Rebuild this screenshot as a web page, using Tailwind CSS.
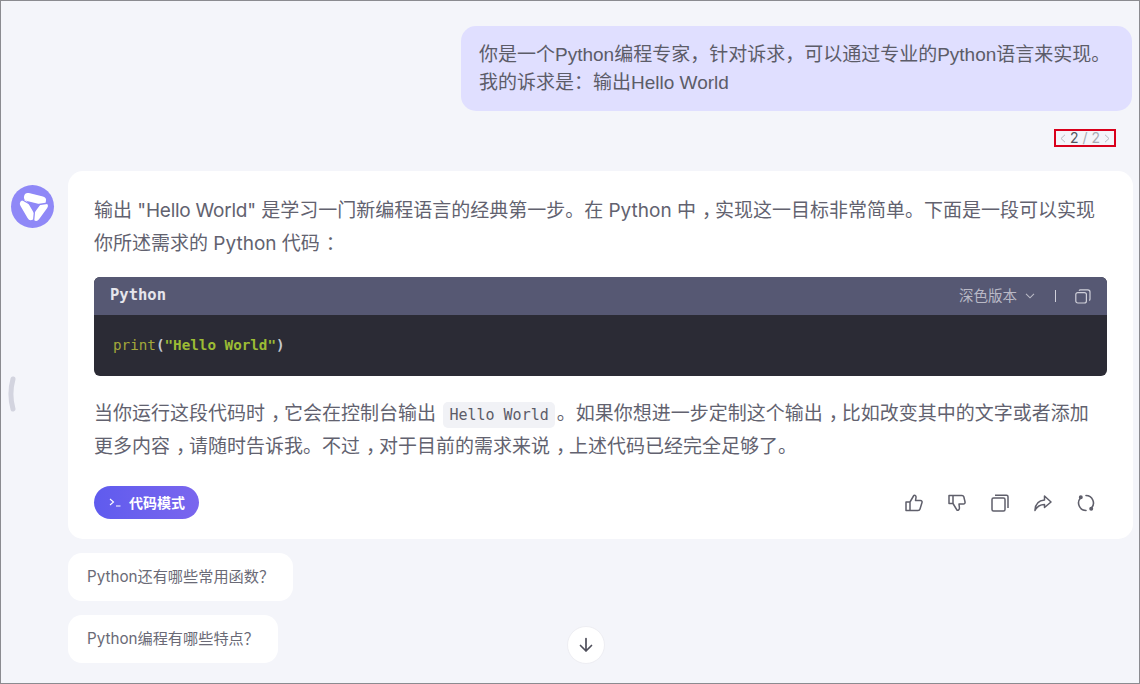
<!DOCTYPE html>
<html lang="zh">
<head>
<meta charset="utf-8">
<script src="https://cdn.jsdelivr.net/npm/@tailwindcss/browser@4"></script>
</head>
<body class="w-[1140px] h-[684px] overflow-hidden bg-[#f4f5fa] font-['Inter','Noto_Sans_CJK_SC',sans-serif] text-[#62626f]">
<div class="relative w-[1140px] h-[684px] border border-[#8b8b90] pt-[25px] overflow-hidden">

  <!-- user question -->
  <div class="flex justify-end pr-[7px]">
    <div class="w-[671px] h-[85px] rounded-[15px] bg-[#e0dfff] pl-[18px] pt-[15px] font-['Liberation_Sans','Noto_Sans_CJK_SC',sans-serif] text-[19px] leading-[28px] text-[#5c5c68]">
      <p class="whitespace-nowrap">你是一个Python编程专家，针对诉求，可以通过专业的Python语言来实现。</p>
      <p class="whitespace-nowrap">我的诉求是：输出Hello World</p>
    </div>
  </div>
  <div class="flex justify-end pr-[23px] mt-[18px]">
    <div class="w-[62px] h-[18px] border-2 border-[#d9001b] flex items-center justify-center gap-[4px] text-[14px] leading-none text-[#a9a9b2]">
      <svg class="w-[6px] h-[9px]" viewBox="0 0 6 9" fill="none" stroke="#b8b8c0" stroke-width="1"><path d="M5 .8 1 4.500 5 8.200"/></svg>
      <span><span class="text-[#55555f]">2</span> / 2</span>
      <svg class="w-[6px] h-[9px]" viewBox="0 0 6 9" fill="none" stroke="#b8b8c0" stroke-width="1"><path d="M1 .8 5 4.500 1 8.200"/></svg>
    </div>
  </div>

  <!-- answer -->
  <div class="flex mt-[24px] pl-[10px] pr-[7px]">
    <div class="w-[43px] h-[43px] mt-[14px] rounded-full bg-[#8f88f7] shrink-0">
      <svg class="w-[43px] h-[43px]" viewBox="0 0 43 43" fill="none" stroke-linecap="round" stroke-linejoin="round">
        <path d="M17 12 31 15.500" stroke="#fff" stroke-width="8"/>
        <path d="M13 19 20 31" stroke="#fff" stroke-width="8"/>
        <path d="M33 21 25 32" stroke="#fff" stroke-width="7.500"/>
        <path d="M19.500 19.500H28L23.500 26Z" fill="#8f88f7" stroke="#8f88f7" stroke-width="1"/>
        <path d="M19.500 19.500 10 14M28 19.500 38 18M23.500 26 22.500 37" stroke="#8f88f7" stroke-width="1.300"/>
      </svg>
    </div>
    <div class="ml-[14px] w-[1065px] h-[368px] rounded-[15px] bg-white pt-[23px] px-[26px]">
      <p class="text-[19px] leading-[33px] whitespace-nowrap">输出 <span class="tracking-[-0.25px]">"Hello World"</span> 是学习一门新编程语言的经典第一步。在 Python 中<span class="pl-[6px] tracking-[-6px]">，</span>实现这一目标非常简单。下面是一段可以实现</p>
      <p class="text-[19px] leading-[33px] whitespace-nowrap">你所述需求的 Python 代码<span class="pl-[6px] tracking-[-6px]">：</span></p>

      <div class="mt-[17px] w-[1013px] h-[99px] rounded-[6px] overflow-hidden bg-[#2b2b35]">
        <div class="h-[38px] bg-[#565873] flex items-center pl-[16px] pr-[16px] text-[#dcdce4]">
          <span class="font-['DejaVu_Sans_Mono',monospace] font-bold text-[15.5px] text-[#e6e6ec]">Python</span>
          <span class="ml-auto text-[14.5px] text-[#b9b9c6]">深色版本</span>
          <svg class="ml-[8px] w-[10px] h-[6px]" viewBox="0 0 10 6" fill="none" stroke="#b9b9c6" stroke-width="1.100"><path d="M1 .8 5 4.800 9 .8"/></svg>
          <span class="ml-[20px] w-px h-[12px] bg-[#d0d0da]"></span>
          <svg class="ml-[19px] w-[16px] h-[15px]" viewBox="0 0 16 15" fill="none" stroke="#cfcfd9" stroke-width="1.200"><rect x=".8" y="3.600" width="10.600" height="10.400" rx="2"/><path d="M4 1.600c.3-.5.8-.8 1.400-.8h7.400c1.200 0 2.200 1 2.200 2.200v7c0 .6-.3 1.200-.8 1.500"/></svg>
        </div>
        <div class="pl-[19px] pt-[20px] font-['DejaVu_Sans_Mono',monospace] text-[14.25px] leading-[20px] font-bold text-[#c3c7cf] whitespace-nowrap"><span class="font-normal text-[#a3a83a]">print</span>(<span class="text-[#9cbc34]">"Hello World"</span>)</div>
      </div>

      <p class="mt-[21px] text-[19px] leading-[33px] whitespace-nowrap">当你运行这段代码时<span class="pl-[6px] tracking-[-6px]">，</span>它会在控制台输出 <code class="inline-block ml-[2px] mr-[2px] h-[26px] leading-[26px] px-[6px] rounded-[5px] bg-[#f1f2f6] font-['DejaVu_Sans_Mono',monospace] text-[15px] text-[#5c5c68]">Hello World</code><span>。</span>如果你想进一步定制这个输出<span class="pl-[6px] tracking-[-6px]">，</span>比如改变其中的文字或者添加</p>
      <p class="text-[19px] leading-[33px] whitespace-nowrap">更多内容<span class="pl-[6px] tracking-[-6px]">，</span>请随时告诉我。不过<span class="pl-[6px] tracking-[-6px]">，</span>对于目前的需求来说<span class="pl-[6px] tracking-[-6px]">，</span>上述代码已经完全足够了。</p>

      <div class="mt-[23px] flex items-center justify-between pr-[12px]">
        <div class="w-[105px] h-[33px] rounded-full bg-gradient-to-r from-[#5f5bee] to-[#7a66ee] flex items-center pl-[15px] text-white text-[14px] font-bold">
          <svg class="w-[12px] h-[9px]" viewBox="0 0 12 9" fill="none" stroke="#fff" stroke-width="1.100"><path d="M1 1 4.500 4 1 7M7 8h4.500"/></svg>
          <span class="ml-[8px]">代码模式</span>
        </div>
        <div class="flex items-center gap-[25px] text-[#5f5f6b]">
          <svg class="w-[18px] h-[18px]" viewBox="0 0 18 18" fill="none" stroke="currentColor" stroke-width="1.500" stroke-linejoin="round"><path d="M1 8h4v8.500H1zM5 8l3.800-6.500c1.500-.6 2.400.5 2.200 2L10.500 6.500h5c1.200 0 1.800 1 1.500 2l-2 6.500c-.3 1-1 1.500-2 1.500H3"/></svg>
          <svg class="w-[18px] h-[18px]" viewBox="0 0 18 18" fill="none" stroke="currentColor" stroke-width="1.500" stroke-linejoin="round"><path d="M1 1.500h4v8H1zM3 1.500h11c1 0 1.500.5 1.800 1.300l1.200 5c.3 1.200-.4 2.200-1.600 2.200h-4.400l.4 3.500c.2 1.800-1 3-2.400 2.700L5 9.500"/></svg>
          <svg class="w-[18px] h-[18px]" viewBox="0 0 18 18" fill="none" stroke="currentColor" stroke-width="1.500" stroke-linejoin="round"><rect x="1" y="4" width="13" height="13" rx="1.500"/><path d="M4 1.200h11.500c.8 0 1.500.7 1.500 1.500V14"/></svg>
          <svg class="w-[18px] h-[18px]" viewBox="0 0 18 18" fill="none" stroke="currentColor" stroke-width="1.500" stroke-linejoin="round"><path d="M10.500 2 17 8l-6.500 5.500V10.500C6 10.500 3 12.500 1 16.500c.2-6 3.500-10 9.500-10.500z"/></svg>
          <svg class="w-[18px] h-[18px]" viewBox="0 0 18 18" fill="none" stroke="currentColor" stroke-width="1.600" stroke-linecap="round"><path d="M9 1.500A7.500 7.500 0 0 1 14.500 14M9 16.500A7.500 7.500 0 0 1 3.500 4"/><circle cx="3.800" cy="3.300" r="1.200" fill="currentColor"/><circle cx="14.200" cy="14.700" r="1.200" fill="currentColor"/></svg>
        </div>
      </div>
    </div>
  </div>

  <!-- suggestions -->
  <div class="pl-[67px] mt-[14px] flex flex-col items-start gap-[14px] text-[15.2px] text-[#6a6a76]">
    <div class="h-[48px] px-[19px] rounded-[14px] bg-white flex items-center">Python还有哪些常用函数？</div>
    <div class="h-[48px] px-[19px] rounded-[14px] bg-white flex items-center">Python编程有哪些特点？</div>
  </div>

  <!-- sidebar handle -->
  <svg class="absolute left-[5px] top-[375px] w-[10px] h-[36px]" viewBox="0 0 10 36" fill="none" stroke="#d3d4df" stroke-width="5" stroke-linecap="round"><path d="M7 3C4.500 12 4.500 24 7 33"/></svg>

  <!-- scroll to bottom -->
  <div class="absolute left-[566px] top-[625px] w-[38px] h-[38px] rounded-full bg-white border border-[#eeeef3] flex items-center justify-center">
    <svg class="w-[16px] h-[16px]" viewBox="0 0 16 16" fill="none" stroke="#4f4f5b" stroke-width="1.700" stroke-linecap="round" stroke-linejoin="round"><path d="M8 1.500V14M2.500 8.500 8 14l5.500-5.500"/></svg>
  </div>
</div>
</body>
</html>
